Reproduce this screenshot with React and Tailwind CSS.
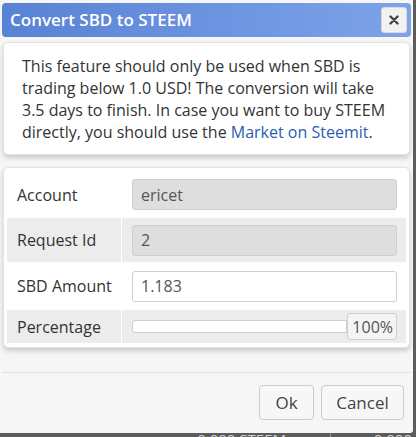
import React from 'react';

const font = { fontFamily: '"Open Sans", "Noto Sans", sans-serif' };

function Row({ label, shaded, height, children }) {
  return (
    <div className={`flex ${height} ${shaded ? 'bg-[#ececec]' : 'bg-white'}`}>
      <div className="w-[115px] shrink-0 flex items-center pl-[10px] text-[16px] text-[#333] border-r border-white">
        {label}
      </div>
      <div className="flex-1 flex items-center pl-[10px] pr-[9px]">{children}</div>
    </div>
  );
}

export default function App() {
  return (
    <div className="relative w-[416px] h-[437px] overflow-hidden bg-[#5c5c5c]" style={font}>
      {/* page behind the dialog */}
      <div className="absolute left-0 top-[429px] w-full flex text-[15px] leading-[20px] text-[#d0d0d0]">
        <span className="pl-[2px]">aw</span>
        <span className="ml-auto pr-[130px]">0.000 STEEM</span>
        <span className="absolute left-[330px] top-[4px] w-px h-[10px] bg-[#999]"></span>
        <span className="absolute right-[4px]">0.000</span>
      </div>

      <div className="relative w-[413px] h-[433px] bg-[#f6f6f6] rounded-br-[3px] pt-[3px] px-[2px] flex flex-col">
        <div className="h-[34px] rounded-[4px] bg-gradient-to-r from-[#5882d4] to-[#7ea3ea] flex items-center pl-[8px] pr-[4px]">
          <span className="text-white text-[17px] font-semibold">Convert SBD to STEEM</span>
          <button className="ml-auto w-[26px] h-[26px] rounded-[3px] bg-[#f2f2f2] border border-[#d8d8d8] flex items-center justify-center">
            <svg width="10" height="10" viewBox="0 0 10 10">
              <path d="M1.5 1.5 L8.5 8.5 M8.5 1.5 L1.5 8.5" stroke="#444" strokeWidth="2.4" strokeLinecap="round" />
            </svg>
          </button>
        </div>

        <div className="mt-[5px] mx-[1px] bg-white border border-[#e2e2e2] rounded-[5px] shadow-[0_3px_5px_rgba(0,0,0,0.18)] pl-[18px] pr-[10px] pt-[12px] pb-[11px] text-[16px] leading-[22px] text-[#333]">
          This feature should only be used when SBD is trading below 1.0 USD! The conversion will take 3.5 days to finish. In case you want to buy STEEM directly, you should use the{' '}
          <a className="text-[#2a5db0]">Market on Steemit</a>.
        </div>

        <div className="mt-[12px] mx-[1px] bg-white border border-[#e2e2e2] rounded-[5px] shadow-[0_3px_5px_rgba(0,0,0,0.18)] p-[3px] pb-[4px]">
          <Row label="Account" height="h-[47px]">
            <div className="w-full h-[31px] rounded-[3px] border border-[#cfcfcf] bg-[#dedede] pl-[8px] flex items-center text-[16px] text-[#555]">ericet</div>
          </Row>
          <Row label="Request Id" shaded height="h-[44px]">
            <div className="w-full h-[31px] rounded-[3px] border border-[#cfcfcf] bg-[#dedede] pl-[8px] flex items-center text-[16px] text-[#555]">2</div>
          </Row>
          <Row label="SBD Amount" height="h-[48px]">
            <div className="w-full h-[31px] rounded-[3px] border border-[#cfcfcf] bg-white pl-[8px] flex items-center text-[16px] text-[#555]">1.183</div>
          </Row>
          <Row label="Percentage" shaded height="h-[33px]">
            <div className="w-full flex items-center">
              <div className="flex-1 h-[13px] rounded-l-[3px] border border-[#cfcfcf] bg-white"></div>
              <div className="w-[50px] h-[27px] rounded-[3px] border border-[#cfcfcf] bg-[#f4f4f4] flex items-center justify-end pr-[3px] text-[16px] text-[#555]">100%</div>
            </div>
          </Row>
        </div>

        <div className="mt-[24px] border-t border-[#dedede]"></div>
        <div className="flex justify-end gap-[7px] pt-[12px] pr-[7px]">
          <button className="w-[55px] h-[35px] rounded-[4px] border border-[#cccccc] bg-[#f7f7f7] text-[17px] text-[#444]">Ok</button>
          <button className="w-[83px] h-[35px] rounded-[4px] border border-[#cccccc] bg-[#f7f7f7] text-[17px] text-[#444]">Cancel</button>
        </div>
      </div>
    </div>
  );
}
